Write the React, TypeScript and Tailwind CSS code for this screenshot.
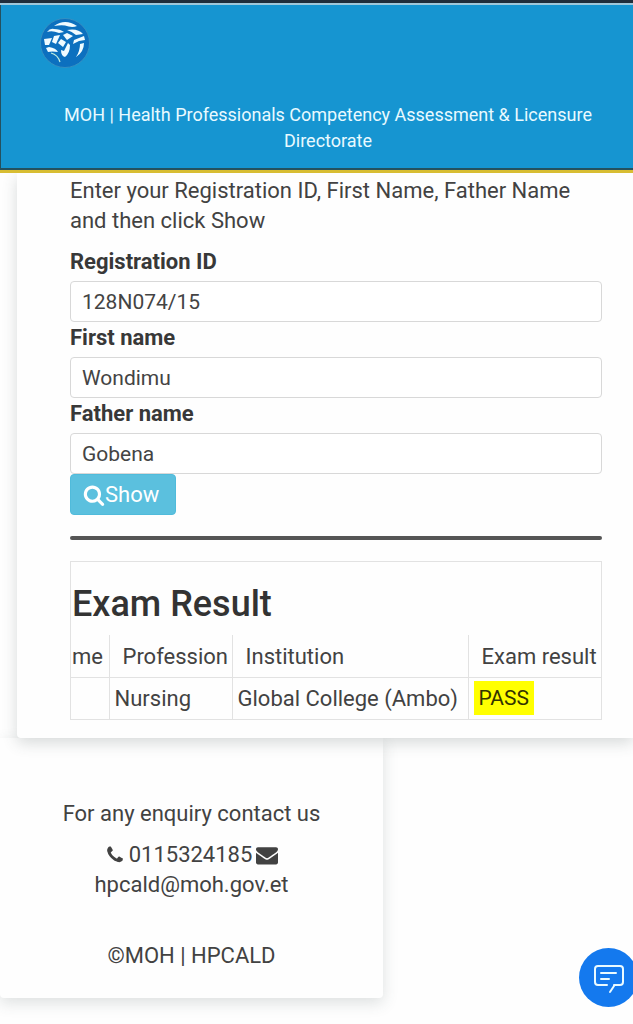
import type { ReactNode } from "react";

const PHONE =
  "M1600 1240q0 27-10 70.5t-21 68.5q-21 50-122 106-94 51-186 51-27 0-53-3.5t-57.5-12.5-47-14.5-55.5-20.5-49-18q-98-35-175-83-127-79-264-216t-216-264q-48-77-83-175-3-9-18-49t-20.5-55.5-14.5-47-12.5-57.5-3.5-53q0-92 51-186 56-101 106-122 25-11 68.5-21t70.5-10q14 0 21 3 18 6 53 76 11 19 30 54t35 63.5 31 53.5q3 4 17.5 25t21.5 35.5 7 28.5q0 20-28.5 50t-62 55-62 53-28.5 46q0 9 5 22.5t8.5 20.5 14 24 11.5 19q76 137 174 235t235 174q2 1 19 11.5t24 14 20.5 8.5 22.5 5q18 0 46-28.5t53-62 55-62 50-28.5q14 0 28.5 7t35.5 21.5 25 17.5q25 15 53.5 31t63.5 35 54 30q70 35 76 53 3 7 3 21z";
const ENVELOPE =
  "M1792 710v794q0 66-47 113t-113 47h-1472q-66 0-113-47t-47-113v-794q44 49 101 87 362 246 497 345 57 42 92.5 65.5t94.5 48 110 24.5h2q51 0 110-24.5t94.5-48 92.5-65.5q170-123 498-345 57-39 100-87zm0-294q0 79-49 151t-122 123q-376 261-468 325-10 7-42.5 31t-54 38.5-52 32.5-57.5 27-50 9h-2q-23 0-50-9t-57.5-27-52-32.5-54-38.5-42.5-31q-91-64-262-182.5t-205-142.5q-62-42-117-115.5t-55-136.5q0-78 41.5-130t118.5-52h1472q65 0 112.5 47t47.5 113z";
const SEARCH =
  "M1216 832q0-185-131.5-316.5t-316.5-131.5-316.5 131.5-131.5 316.5 131.5 316.5 316.5 131.5 316.5-131.5 131.5-316.5zm512 832q0 52-38 90t-90 38q-54 0-90-38l-343-342q-179 124-399 124-143 0-273.5-55.5t-225-150-150-225-55.5-273.5 55.5-273.5 150-225 225-150 273.5-55.5 273.5 55.5 225 150 150 225 55.5 273.5q0 220-124 399l343 343q37 37 37 90z";

function Glyph({ d, className }: { d: string; className: string }) {
  return (
    <svg viewBox="0 0 1792 1792" fill="currentColor" aria-hidden="true" className={className}>
      <path d={d} />
    </svg>
  );
}

function Logo() {
  return (
    <svg viewBox="0 0 50 50" className="size-[50px]" role="img" aria-label="MOH">
      <circle cx="25" cy="25" r="24.5" fill="#0c70bf" stroke="#3f93c0" strokeWidth="0.8" />
      <g fill="#effbff">
        <path d="M14 8Q25 0 37 8Q32 10 25 7.500Q20 7 14 8Z" />
        <path d="M7 14Q10 10 14 11Q20 11 24 14L19 15Q12 12 7 14Z" />
        <path d="M27 12Q38 10 43 16L36 17Q33 14 27 12Z" />
        <path d="M4 21L12 20L9 27L5 27Z" />
        <path d="M14 18L20 17L16 26L12 24Z" />
        <path d="M23 17L27 15L33 18L27 22Z" />
        <path d="M21 21L26 24L23 29L18 25Z" />
        <path d="M34 22L44 18L45 22L39 23L33 26Z" />
        <path d="M6 30L9 29Q16 30 18 34Q12 33 8 34Z" />
        <path d="M21 32L24 33L28 25L30 27Q30 35 25 39Q21 38 21 32Z" />
        <path d="M40 26L44 25Q44 34 36 39Q40 33 40 26Z" />
      </g>
      <path d="M11 35Q18 37 20 44" fill="none" stroke="#bfeedd" strokeWidth="1.2" />
    </svg>
  );
}

function Field({ id, label, value }: { id: string; label: string; value: string }) {
  return (
    <div>
      <label htmlFor={id} className="block pt-px pb-1 font-bold text-[#383838]">
        {label}
      </label>
      <input
        id={id}
        type="text"
        defaultValue={value}
        className="block h-[41px] w-full rounded border border-[#d8d8d8] bg-white px-[11px] text-[21px] text-[#444444] outline-none focus:border-[#66afe9]"
      />
    </div>
  );
}

function HeadCell({ children, className = "" }: { children: ReactNode; className?: string }) {
  return (
    <th scope="col" className={`h-[42px] border-[#e2e2e2] pt-[2px] text-left font-normal whitespace-nowrap ${className}`}>
      {children}
    </th>
  );
}

export default function App() {
  return (
    <div className="min-h-screen overflow-x-hidden bg-[#fefefe] font-['Roboto',sans-serif] text-[22px] leading-[30px] text-[#424242]">
      <header className="relative z-20 border-b-3 border-[#d8bd32] bg-[#1695d1]">
        <div className="h-[3px] bg-[#202d3b]" />
        <div className="h-[2px] bg-[#9fc7da]" />
        <div className="border-b-2 border-l border-[#24515f] pt-[13px] pb-[14px]">
          <div className="pl-[39px]">
            <Logo />
          </div>
          <h1 className="mt-[34px] pr-4 pl-[38px] text-center text-[18px] leading-[26px] text-[#e9faff]">
            MOH | Health Professionals Competency Assessment &amp; Licensure Directorate
          </h1>
        </div>
      </header>

      <main className="relative z-10 ml-[17px] rounded-bl bg-[#fefefe] pr-[31px] pb-[18px] pl-[53px] shadow-[0_5px_15px_rgba(60,75,75,0.2)]">
        <p className="pt-[3px] pb-[10px]">
          Enter your Registration ID, First Name, Father Name and then click Show
        </p>
        <form onSubmit={(event) => event.preventDefault()}>
          <Field id="registration" label="Registration ID" value="128N074/15" />
          <Field id="first-name" label="First name" value="Wondimu" />
          <Field id="father-name" label="Father name" value="Gobena" />
          <button
            type="submit"
            className="flex h-[41px] items-center rounded border border-[#50bbdb] bg-[#5bc0de] pr-4 pl-3 text-white"
          >
            <Glyph d={SEARCH} className="size-[22px]" />
            Show
          </button>
        </form>
        <hr className="mt-[21px] mb-[21px] h-1 rounded-full border-0 bg-[#555555]" />

        <section className="overflow-hidden border border-[#e2e2e2]">
          <h2 className="pt-[21px] pb-[10px] pl-px text-[36px] leading-[42px] font-medium text-[#333333]">
            Exam Result
          </h2>
          <table className="w-full table-fixed border-collapse">
            <colgroup>
              <col className="w-[38px]" />
              <col className="w-[123px]" />
              <col />
              <col className="w-[133px]" />
            </colgroup>
            <thead>
              <tr>
                <HeadCell className="pl-px">me</HeadCell>
                <HeadCell className="border-l pl-[13px]">Profession</HeadCell>
                <HeadCell className="border-l pl-[13px]">Institution</HeadCell>
                <HeadCell className="border-l pl-[13px]">Exam result</HeadCell>
              </tr>
            </thead>
            <tbody>
              <tr className="border-t border-[#e2e2e2] whitespace-nowrap">
                <td className="h-[42px]" />
                <td className="border-l border-[#e2e2e2] pt-px pl-[5px]">Nursing</td>
                <td className="border-l border-[#e2e2e2] pt-px pl-[5px]">Global College (Ambo)</td>
                <td className="border-l border-[#e2e2e2] pl-[5px]">
                  <mark className="inline-block h-[34px] bg-[#ffff00] px-[5px] text-[21px] leading-[34px] text-[#333300]">
                    PASS
                  </mark>
                </td>
              </tr>
            </tbody>
          </table>
        </section>
      </main>

      <footer className="w-[383px] max-w-full rounded-b bg-[#fefefe] pt-[61px] pb-[27px] text-center shadow-[0_5px_15px_rgba(60,75,75,0.17)]">
        <p>For any enquiry contact us</p>
        <address className="mt-[11px] not-italic">
          <span className="flex items-center justify-center gap-1">
            <Glyph d={PHONE} className="size-[20px]" />
            <a href="tel:0115324185">0115324185</a>
            <Glyph d={ENVELOPE} className="size-[22px]" />
          </span>
          <a href="mailto:hpcald@moh.gov.et">hpcald@moh.gov.et</a>
        </address>
        <p className="mt-[41px]">©MOH | HPCALD</p>
      </footer>

      <button
        type="button"
        aria-label="Chat"
        className="fixed -right-[5px] bottom-[17px] z-30 flex size-[59px] items-center justify-center rounded-full bg-[#1479ee] text-[#eafaff]"
      >
        <svg viewBox="0 0 32 32" className="size-8" fill="none" stroke="currentColor" strokeWidth="2" strokeLinecap="round" strokeLinejoin="round" aria-hidden="true">
          <path d="M14 23H5a3 3 0 0 1-3-3V7a3 3 0 0 1 3-3h22a3 3 0 0 1 3 3v13a3 3 0 0 1-3 3h-6v1l-4 6" />
          <path d="M8 11h15M8 17h8" />
        </svg>
      </button>
    </div>
  );
}
